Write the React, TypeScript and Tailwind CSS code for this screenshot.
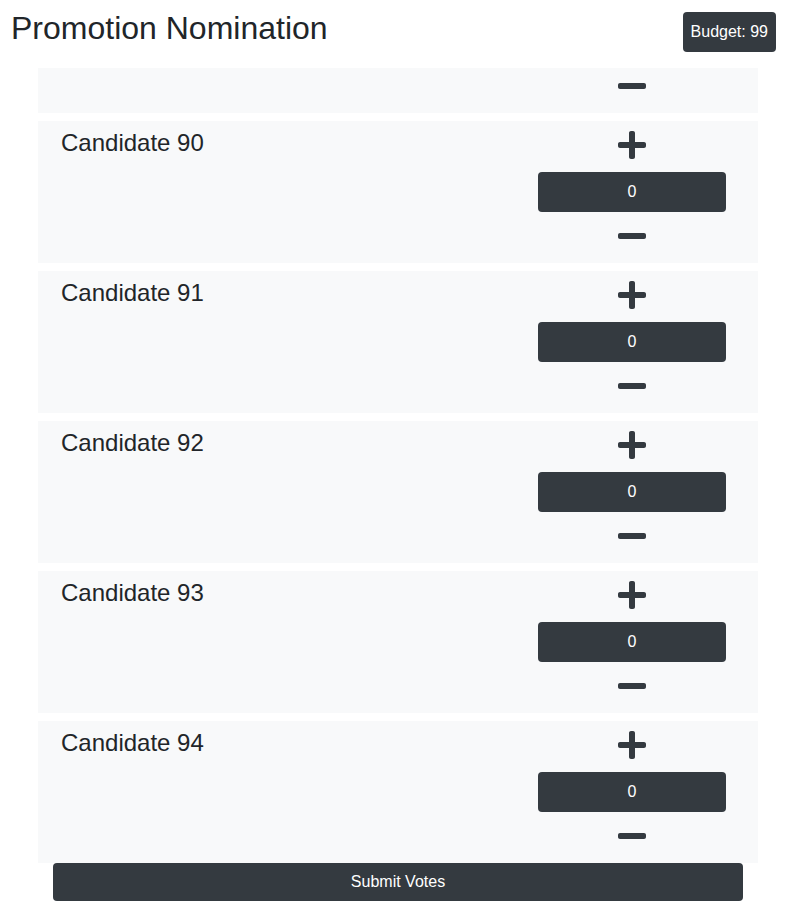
import { useEffect, useRef } from 'react';
import { FaPlus, FaMinus } from 'react-icons/fa';

const candidates = Array.from({ length: 95 }, (_, i) => ({ id: i, name: `Candidate ${i}`, votes: 0 }));

function CandidateCard({ name, votes }: { name: string; votes: number }) {
    return (
        <div className="flex justify-between bg-[#f8f9fa] h-[142px] shrink-0 pl-[23px] pr-[32px]">
            <div className="pt-[8px] text-[24px] leading-[1.2] text-[#212529]">{name}</div>
            <div className="flex flex-col items-center w-[188px]">
                <button className="h-[48px] w-full flex items-center justify-center text-[#343a40]">
                    <FaPlus size={32} />
                </button>
                <input
                    readOnly
                    value={votes}
                    className="mt-[3px] h-[40px] w-full rounded bg-[#343a40] text-white text-center text-base outline-none"
                />
                <button className="h-[48px] w-full flex items-center justify-center text-[#343a40]">
                    <FaMinus size={32} />
                </button>
            </div>
        </div>
    );
}

export default function App() {
    const listRef = useRef<HTMLDivElement>(null);

    // start scrolled to the end of the list
    useEffect(() => {
        if (listRef.current) listRef.current.scrollTop = listRef.current.scrollHeight;
    }, []);

    return (
        <div className="w-[797px] h-[909px] bg-white font-['Liberation_Sans',Arial,sans-serif] text-[#212529]">
            {/* Header */}
            <div className="flex items-start justify-between pl-[11px] pr-[21px] pt-[9px]">
                <h1 className="text-[32px] leading-[1.2] font-normal">Promotion Nomination</h1>
                <div className="mt-[3px] rounded bg-[#343a40] text-white text-base leading-6 p-2">Budget: 99</div>
            </div>

            {/* Candidates */}
            <div
                ref={listRef}
                className="mt-[16px] ml-[38px] w-[720px] h-[795px] overflow-y-auto [scrollbar-width:none] flex flex-col gap-2"
            >
                {candidates.map(c => (
                    <CandidateCard key={c.id} name={c.name} votes={c.votes} />
                ))}
            </div>

            <button className="ml-[53px] w-[690px] h-[38px] rounded bg-[#343a40] text-white text-base">Submit Votes</button>
        </div>
    );
}
